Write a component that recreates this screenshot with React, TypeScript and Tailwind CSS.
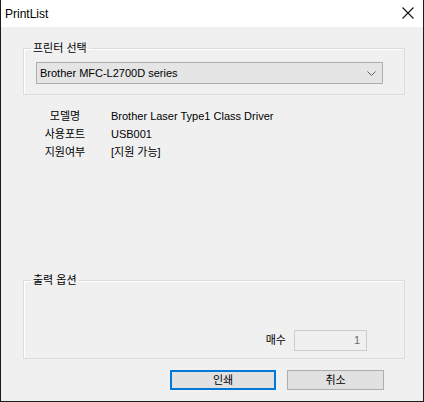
const font = { fontFamily: '"Liberation Sans", "Noto Sans CJK KR", sans-serif' };

function GroupBox({ label, className, children }: { label: string; className?: string; children: React.ReactNode }) {
  return (
    <fieldset
      className={`mx-[22px] w-[382px] border border-[#dcdcdc] shadow-[inset_1px_1px_0_#ffffff] ${className ?? ""}`}
    >
      <legend className="ml-[7px] px-[2px] text-[11px] leading-[16px] text-black">{label}</legend>
      {children}
    </fieldset>
  );
}

function InfoRow({ label, value }: { label: string; value: string }) {
  return (
    <div className="flex h-[18px] items-center whitespace-nowrap">
      <span className="ml-[36px] w-[56px] text-center">{label}</span>
      <span className="ml-[18px]">{value}</span>
    </div>
  );
}

export default function App() {
  return (
    <div
      className="flex h-[402px] w-[424px] flex-col border border-t-0 border-[#1c1c1c] bg-[#f0f0f0] text-[11px] text-black"
      style={font}
    >
      {/* title bar */}
      <div className="flex h-[27px] shrink-0 items-center justify-between bg-white pl-[4px] pr-[9px]">
        <span className="text-[12px] leading-none">PrintList</span>
        <svg width="12" height="12" viewBox="0 0 12 12" className="mb-[1px]">
          <path d="M0.5 0.5 L11.5 11.5 M11.5 0.5 L0.5 11.5" stroke="#111" strokeWidth="1.1" />
        </svg>
      </div>

      <GroupBox label="프린터 선택" className="mt-[13px] pb-[10px]">
        <div className="ml-[12px] mt-[6px] flex h-[22px] w-[347px] items-center justify-between border border-[#adadad] bg-[#e5e5e5] pl-[3px] pr-[6px]">
          <span className="leading-none">Brother MFC-L2700D series</span>
          <svg width="9" height="5" viewBox="0 0 9 5">
            <path d="M0.5 0.5 L4.5 4.5 L8.5 0.5" fill="none" stroke="#606060" strokeWidth="1" />
          </svg>
        </div>
      </GroupBox>

      <div className="mt-[12px] flex flex-col">
        <InfoRow label="모델명" value="Brother Laser Type1 Class Driver" />
        <InfoRow label="사용포트" value="USB001" />
        <InfoRow label="지원여부" value="[지원 가능]" />
      </div>

      <GroupBox label="출력 옵션" className="mt-[111px] h-[87px]">
        <div className="mt-[42px] flex items-center justify-end pr-[37px]">
          <span className="mr-[8px]">매수</span>
          <div className="flex h-[21px] w-[73px] items-center justify-end border border-[#cccccc] bg-[#f0f0f0] pr-[6px] text-[#6d6d6d]">
            1
          </div>
        </div>
      </GroupBox>

      <div className="mt-[11px] flex">
        <button className="ml-[169px] flex h-[20px] w-[106px] items-center justify-center border-2 border-[#0078d7] bg-[#e1e1e1]">
          인쇄
        </button>
        <button className="ml-[11px] flex h-[20px] w-[97px] items-center justify-center border border-[#adadad] bg-[#e1e1e1]">
          취소
        </button>
      </div>
    </div>
  );
}
